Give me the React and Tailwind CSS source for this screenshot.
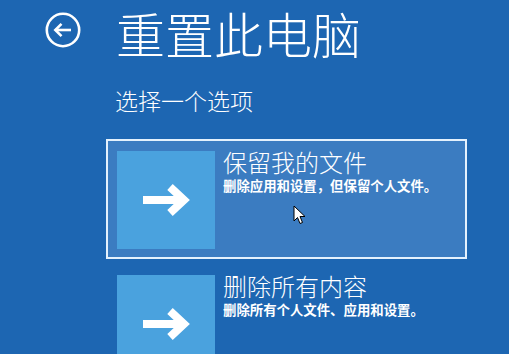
import React from "react";

function Arrow() {
  return (
    <svg width="48" height="34" viewBox="0 0 48 34" fill="none">
      <path d="M1 17 H42" stroke="white" strokeWidth="8" />
      <path d="M28 4 L42 17 L28 30" stroke="white" strokeWidth="8" strokeLinejoin="miter" strokeLinecap="butt" />
    </svg>
  );
}

function Option({ title, desc, active }) {
  return (
    <div
      className={
        "w-[361px] h-[120px] border-2 pl-[9px] pt-[10px] flex gap-[8px] " +
        (active ? "border-[#e4f1fd] bg-[#3b7cc1]" : "border-transparent")
      }
    >
      <div className="w-[98px] h-[98px] shrink-0 bg-[#4aa2de] flex items-center justify-center">
        <Arrow />
      </div>
      <div className="flex flex-col -mt-[3px]">
        <div className="text-[24px] leading-[28px] font-light text-white">{title}</div>
        <div className="text-[13.4px] leading-[16px] font-bold text-white mt-[1px]">{desc}</div>
      </div>
    </div>
  );
}

export default function App() {
  return (
    <div
      className="relative w-[509px] h-[354px] overflow-hidden bg-[#1d66b2] text-white"
      style={{ fontFamily: '"Noto Sans CJK SC", "Noto Sans", sans-serif' }}
    >
      <div className="flex items-start pl-[45px] pt-[4px]">
        <svg width="36" height="36" viewBox="0 0 36 36" fill="none" className="mt-[8px]">
          <circle cx="18" cy="18" r="16.2" stroke="white" strokeWidth="2.6" />
          <path d="M10.5 18 H26" stroke="white" strokeWidth="2.6" />
          <path d="M16.5 11.8 L10.3 18 L16.5 24.2" stroke="white" strokeWidth="2.6" strokeLinejoin="miter" />
        </svg>
        <div className="ml-[35px] text-[49px] leading-[57px] font-light">重置此电脑</div>
      </div>
      <div className="pl-[115px] mt-[26px] text-[23px] leading-[27px] font-light">选择一个选项</div>
      <div className="pl-[106px] mt-[25px] flex flex-col gap-[4px]">
        <Option title="保留我的文件" desc="删除应用和设置，但保留个人文件。" active />
        <Option title="删除所有内容" desc="删除所有个人文件、应用和设置。" />
      </div>
      <svg className="absolute left-[293px] top-[205px]" width="13" height="20" viewBox="0 0 13 20">
        <path d="M1 1 L1 16 L4.5 12.5 L7 18.5 L9.5 17.5 L7 11.5 L12 11.5 Z" fill="white" stroke="black" strokeWidth="1" strokeLinejoin="round" />
      </svg>
    </div>
  );
}
